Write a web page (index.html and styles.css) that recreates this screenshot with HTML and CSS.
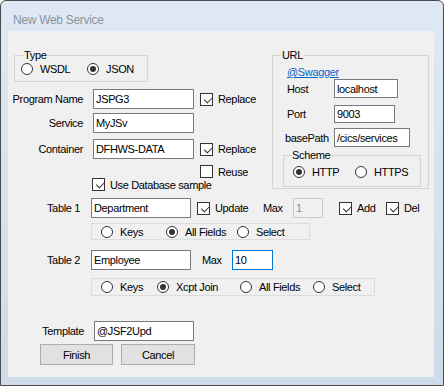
FILE: index.html
```html
<!DOCTYPE html>
<html lang="en">
<head>
    <meta charset="UTF-8">
    <title>New Web Service</title>
    <link rel="stylesheet" href="styles.css">
</head>
<body>

<div class="window">
    <div class="titlebar">New Web Service</div>
    <div class="client">
        <div class="top">
            <div class="left">
                <fieldset class="group type-group">
                    <legend>Type</legend>
                    <div class="radios">
                        <span class="opt w-wsdl"><span class="radio"></span>WSDL</span>
                        <span class="opt"><span class="radio on"></span>JSON</span>
                    </div>
                </fieldset>

                <div class="row row-prog">
                    <span class="lbl">Program Name</span>
                    <input class="field" type="text" value="JSPG3">
                    <span class="opt cb-after"><span class="check on"></span>Replace</span>
                </div>
                <div class="row row-svc">
                    <span class="lbl">Service</span>
                    <input class="field" type="text" value="MyJSv">
                </div>
                <div class="row row-cont">
                    <span class="lbl">Container</span>
                    <input class="field" type="text" value="DFHWS-DATA">
                    <span class="opt cb-after"><span class="check on"></span>Replace</span>
                </div>
                <div class="line line-reuse">
                    <span class="opt"><span class="check"></span>Reuse</span>
                </div>
                <div class="line line-db">
                    <span class="opt"><span class="check on"></span>Use Database sample</span>
                </div>
            </div>

            <fieldset class="group url">
                <legend>URL</legend>
                <a class="link" href="#">@Swagger</a>
                <div class="url-row">
                    <span class="ulbl">Host</span>
                    <input class="field host" type="text" value="localhost">
                </div>
                <div class="url-row row-port">
                    <span class="ulbl">Port</span>
                    <input class="field port" type="text" value="9003">
                </div>
                <div class="url-row row-path">
                    <span class="ulbl bp">basePath</span>
                    <input class="field path" type="text" value="/cics/services">
                </div>
                <fieldset class="group scheme">
                    <legend>Scheme</legend>
                    <div class="radios">
                        <span class="opt w-http"><span class="radio on"></span>HTTP</span>
                        <span class="opt"><span class="radio"></span>HTTPS</span>
                    </div>
                </fieldset>
            </fieldset>
        </div>

        <div class="row row-t1">
            <span class="lbl tlbl">Table 1</span>
            <input class="field tfield" type="text" value="Department">
            <span class="opt w-update"><span class="check on"></span>Update</span>
            <span class="max">Max</span>
            <input class="field small" type="text" value="1" disabled>
            <span class="opt w-add"><span class="check on"></span>Add</span>
            <span class="opt"><span class="check on"></span>Del</span>
        </div>
        <div class="choices choices-1">
            <span class="opt w-keys1"><span class="radio"></span>Keys</span>
            <span class="opt w-all1"><span class="radio on"></span>All Fields</span>
            <span class="opt"><span class="radio"></span>Select</span>
        </div>

        <div class="row row-t2">
            <span class="lbl tlbl">Table 2</span>
            <input class="field tfield" type="text" value="Employee">
            <span class="max max2">Max</span>
            <input class="field focus" type="text" value="10">
        </div>
        <div class="choices choices-2">
            <span class="opt w-keys2"><span class="radio"></span>Keys</span>
            <span class="opt w-xcpt"><span class="radio on"></span>Xcpt Join</span>
            <span class="opt w-all2"><span class="radio"></span>All Fields</span>
            <span class="opt"><span class="radio"></span>Select</span>
        </div>

        <div class="row row-tpl">
            <span class="lbl tpl-lbl">Template</span>
            <input class="field tpl-field" type="text" value="@JSF2Upd">
        </div>
        <div class="buttons">
            <button class="btn">Finish</button>
            <button class="btn btn-cancel">Cancel</button>
        </div>
    </div>
</div>

</body>
</html>
```

FILE: styles.css
```css
body {
    margin: 0;
    background: #fff;
    font-family: "Liberation Sans", Arial, sans-serif;
    font-size: 11px;
    letter-spacing: -0.35px;
    color: #000;
}
.window {
    width: 444px;
    height: 386px;
    box-sizing: border-box;
    border: 1px solid #4a4a4a;
    border-radius: 6px 6px 0 0;
    background: linear-gradient(#dfe9f5, #cddbea);
    padding: 0 9px 8px 7px;
}
.titlebar {
    height: 30px;
    box-sizing: border-box;
    padding: 6px 0 0 5px;
    line-height: 26px;
    font-size: 12px;
    letter-spacing: -0.3px;
    color: #8a939c;
}
.client {
    background: #f0f0f0;
    height: 346px;
    box-sizing: border-box;
    padding-top: 18px;
}
.top {
    display: flex;
    align-items: flex-start;
}
.left {
    width: 264px;
    flex: none;
}

/* group boxes */
.group {
    margin: 0;
    padding: 0;
    min-width: 0;
    border: 1px solid #d5d5d5;
    box-sizing: border-box;
}
.group legend {
    padding: 0 1px;
    line-height: 12px;
}
.type-group {
    margin-left: 6px;
    width: 134px;
    padding: 0 0 4px 6px;
}
.type-group legend {
    margin-left: 2px;
}
.radios {
    display: flex;
    align-items: center;
    height: 16px;
}

/* options */
.opt {
    display: flex;
    align-items: center;
    white-space: nowrap;
    flex: none;
}
.radio {
    position: relative;
    width: 12px;
    height: 12px;
    box-sizing: border-box;
    border: 1px solid #333;
    border-radius: 50%;
    background: #fff;
    margin-right: 7px;
    flex: none;
}
.radio.on::after {
    content: '';
    position: absolute;
    left: 2px;
    top: 2px;
    width: 6px;
    height: 6px;
    border-radius: 50%;
    background: #333;
}
.check {
    position: relative;
    width: 13px;
    height: 13px;
    box-sizing: border-box;
    border: 1px solid #333;
    background: #fff;
    margin-right: 5px;
    flex: none;
}
.check.on::after {
    content: '';
    position: absolute;
    left: 2px;
    top: 1px;
    width: 7px;
    height: 4px;
    border-left: 1px solid #333;
    border-bottom: 1px solid #333;
    transform: rotate(-45deg) translate(0px, 2px);
}

/* rows */
.row {
    display: flex;
    align-items: center;
    height: 20px;
}
.lbl {
    width: 75px;
    margin-right: 10px;
    text-align: right;
    flex: none;
}
.field {
    width: 101px;
    height: 20px;
    box-sizing: border-box;
    border: 1px solid #7a7a7a;
    background: #fff;
    margin: 0;
    padding: 0 2px;
    font: inherit;
    letter-spacing: inherit;
    color: #000;
    flex: none;
    outline: none;
}
.cb-after {
    margin-left: 6px;
}
.row-prog {
    margin-top: 7px;
}
.row-svc {
    margin-top: 4px;
}
.row-cont {
    margin-top: 6px;
}
.line {
    display: flex;
    height: 13px;
}
.line-reuse {
    margin-top: 6px;
    padding-left: 192px;
}
.line-db {
    padding-left: 84px;
}

/* URL box */
.url {
    width: 157px;
    padding-bottom: 1px;
}
.url legend {
    margin-left: 8px;
}
.link {
    display: block;
    margin: 5px 0 0 14px;
    height: 13px;
    line-height: 13px;
    color: #0066cc;
    text-decoration: underline;
}
.url-row {
    display: flex;
    align-items: center;
    margin-left: 14px;
}
.ulbl {
    width: 47px;
    flex: none;
}
.ulbl.bp {
    margin-left: -2px;
    width: 49px;
}
.host {
    width: 64px;
    height: 19px;
}
.row-port {
    margin-top: 7px;
}
.port {
    width: 61px;
    height: 18px;
}
.row-path {
    margin-top: 5px;
}
.path {
    width: 76px;
    height: 19px;
}
.scheme {
    margin: 2px 0 0 10px;
    width: 138px;
    padding: 3px 0 6px 9px;
}
.scheme legend {
    margin-left: -2px;
}
.scheme .radios {
    margin-top: -3px;
    padding-top: 3px;
}
.w-wsdl {
    width: 66px;
}
.w-http {
    width: 62px;
}

/* tables */
.tlbl {
    width: 72px;
    margin-right: 11px;
}
.tfield {
    width: 100px;
}
.row-t1 {
    margin-top: 7px;
}
.w-update {
    margin-left: 6px;
    width: 66px;
}
.max {
    width: 30px;
    flex: none;
}
.max2 {
    margin-left: 11px;
}
.small {
    width: 30px;
    border-color: #cccccc;
    background: #f0f0f0;
    color: #8a8a8a;
}
.w-add {
    margin-left: 16px;
    width: 47px;
}
.focus {
    width: 41px;
    border-color: #0078d7;
}
.choices {
    display: flex;
    align-items: center;
    margin-left: 83px;
    padding-left: 9px;
    box-sizing: border-box;
    border: 1px solid #dcdcdc;
}
.choices-1 {
    margin-top: 5px;
    width: 219px;
    height: 17px;
}
.w-keys1 {
    width: 65px;
}
.w-all1 {
    width: 71px;
}
.row-t2 {
    margin-top: 10px;
}
.choices-2 {
    margin-top: 8px;
    width: 284px;
    height: 18px;
}
.w-keys2 {
    width: 56px;
}
.w-xcpt {
    width: 83px;
}
.w-all2 {
    width: 73px;
}

/* bottom */
.row-tpl {
    margin-top: 25px;
}
.tpl-lbl {
    width: 76px;
}
.tpl-field {
    width: 100px;
}
.buttons {
    display: flex;
    gap: 8px;
    margin: 3px 0 0 32px;
}
.btn {
    width: 73px;
    height: 21px;
    box-sizing: border-box;
    border: 1px solid #adadad;
    background: #e1e1e1;
    font: inherit;
    letter-spacing: inherit;
    color: #000;
    padding: 0;
}
.btn-cancel {
    width: 74px;
}
```
